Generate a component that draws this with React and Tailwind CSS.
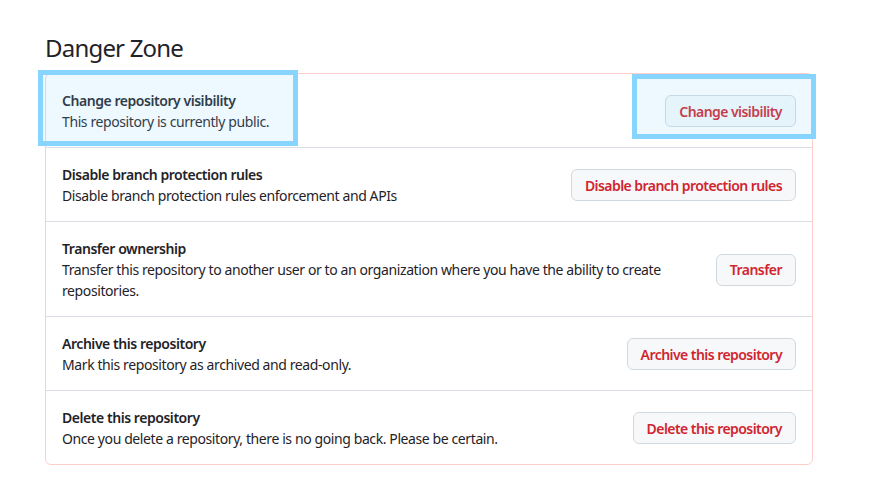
import React from 'react';

const rows = [
  {
    title: 'Change repository visibility',
    desc: 'This repository is currently public.',
    action: 'Change visibility',
  },
  {
    title: 'Disable branch protection rules',
    desc: 'Disable branch protection rules enforcement and APIs',
    action: 'Disable branch protection rules',
  },
  {
    title: 'Transfer ownership',
    desc: 'Transfer this repository to another user or to an organization where you have the ability to create repositories.',
    action: 'Transfer',
  },
  {
    title: 'Archive this repository',
    desc: 'Mark this repository as archived and read-only.',
    action: 'Archive this repository',
  },
  {
    title: 'Delete this repository',
    desc: 'Once you delete a repository, there is no going back. Please be certain.',
    action: 'Delete this repository',
  },
];

const DangerRow = ({ title, desc, action, last }) => (
  <div className={`flex items-center gap-4 px-4 pt-4 pb-[15px] ${last ? '' : 'border-b border-[#d8dee4]'}`}>
    <div className="flex-1 min-w-0">
      <div className="text-[14px] leading-[21px] font-semibold tracking-[-0.45px] text-[#1f2328]">{title}</div>
      <div className="text-[14px] leading-[21px] tracking-[-0.4px] text-[#1f2328] pr-[28px]">{desc}</div>
    </div>
    <button className="shrink-0 h-8 px-[13px] rounded-md border border-[#d1d9e0] bg-[#f6f8fa] text-[14px] font-semibold tracking-[-0.55px] text-[#d1242f]">
      {action}
    </button>
  </div>
);

export default function App() {
  return (
    <div
      className="min-h-[500px] bg-white pl-[45px] pr-[73px] pt-[30px]"
      style={{ fontFamily: '"Segoe UI", "Noto Sans", "Open Sans", sans-serif' }}
    >
      <h2 className="text-[24px] leading-[36px] font-normal tracking-[-0.8px] text-[#1f2328] mb-[7px]">Danger Zone</h2>
      <div className="relative rounded-md border border-[#ffcecb]">
        {rows.map((r, i) => (
          <DangerRow key={r.title} {...r} last={i === rows.length - 1} />
        ))}
        {/* inspector highlight boxes */}
        <div className="pointer-events-none absolute left-[-8px] top-[-4px] w-[260px] h-[76px] border-[5px] border-[#87d4ff] bg-[#87d4ff]/15" />
        <div className="pointer-events-none absolute left-[586px] top-0 w-[184px] h-[65px] border-[5px] border-[#87d4ff] bg-[#87d4ff]/15" />
      </div>
    </div>
  );
}
